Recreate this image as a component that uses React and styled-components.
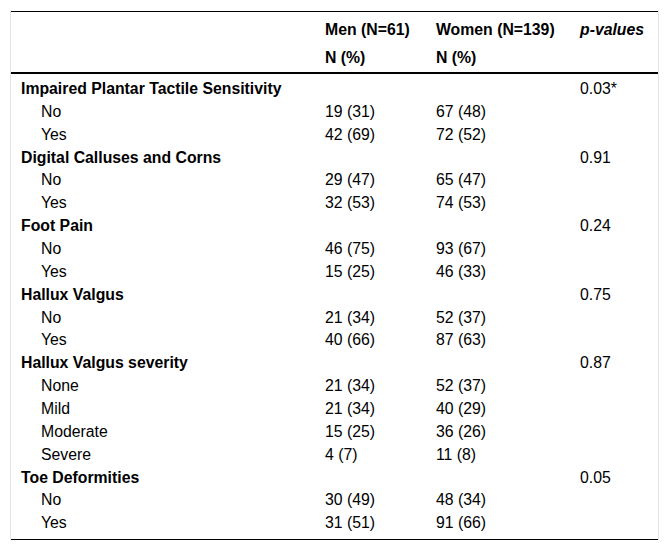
import React from "react";
import styled, { createGlobalStyle } from "styled-components";

const GlobalStyle = createGlobalStyle`
  body {
    margin: 0;
    background: #fff;
    font-family: "Liberation Sans", Arial, sans-serif;
    color: #000;
  }
`;

const Frame = styled.div`
  margin: 10px 0 0 10px;
  width: 647px;
  padding-top: 1px;
  border-left: 1px solid #e4e4e4;
  border-right: 1px solid #e4e4e4;
`;

const Table = styled.table`
  width: 647px;
  border-collapse: collapse;
  table-layout: fixed;
  font-size: 15.8px;
  border-top: 1px solid #000;
  border-bottom: 1px solid #000;
`;

const HeadRow = styled.tr`
  &:last-child {
    border-bottom: 2px solid #000;
  }
`;

const Th = styled.th`
  text-align: left;
  font-weight: bold;
  font-style: ${(p) => (p.$italic ? "italic" : "normal")};
  line-height: 16px;
  white-space: nowrap;
  padding: ${(p) => (p.$second ? "7px 0 6px" : "10px 0 5px")};
`;

const Body = styled.tbody`
  tr:first-child td {
    padding-top: 4px;
  }
  tr:last-child td {
    padding-bottom: 4px;
  }
`;

const Td = styled.td`
  line-height: 22.86px;
  padding: 0;
  white-space: nowrap;
  font-weight: ${(p) => (p.$group ? "bold" : "normal")};
  padding-left: ${(p) => (p.$indent ? "30px" : p.$label ? "10px" : "0")};
`;

const groups = [
  {
    title: "Impaired Plantar Tactile Sensitivity",
    p: "0.03*",
    rows: [
      ["No", "19 (31)", "67 (48)"],
      ["Yes", "42 (69)", "72 (52)"],
    ],
  },
  {
    title: "Digital Calluses and Corns",
    p: "0.91",
    rows: [
      ["No", "29 (47)", "65 (47)"],
      ["Yes", "32 (53)", "74 (53)"],
    ],
  },
  {
    title: "Foot Pain",
    p: "0.24",
    rows: [
      ["No", "46 (75)", "93 (67)"],
      ["Yes", "15 (25)", "46 (33)"],
    ],
  },
  {
    title: "Hallux Valgus",
    p: "0.75",
    rows: [
      ["No", "21 (34)", "52 (37)"],
      ["Yes", "40 (66)", "87 (63)"],
    ],
  },
  {
    title: "Hallux Valgus severity",
    p: "0.87",
    rows: [
      ["None", "21 (34)", "52 (37)"],
      ["Mild", "21 (34)", "40 (29)"],
      ["Moderate", "15 (25)", "36 (26)"],
      ["Severe", "4 (7)", "11 (8)"],
    ],
  },
  {
    title: "Toe Deformities",
    p: "0.05",
    rows: [
      ["No", "30 (49)", "48 (34)"],
      ["Yes", "31 (51)", "91 (66)"],
    ],
  },
];

const App = () => {
  return (
    <>
      <GlobalStyle />
      <Frame>
        <Table>
          <colgroup>
            <col style={{ width: 314 }} />
            <col style={{ width: 111 }} />
            <col style={{ width: 144 }} />
            <col style={{ width: 78 }} />
          </colgroup>
          <thead>
            <HeadRow>
              <Th />
              <Th>Men (N=61)</Th>
              <Th>Women (N=139)</Th>
              <Th $italic>p-values</Th>
            </HeadRow>
            <HeadRow>
              <Th $second />
              <Th $second>N (%)</Th>
              <Th $second>N (%)</Th>
              <Th $second />
            </HeadRow>
          </thead>
          <Body>
            {groups.map((g) => (
              <React.Fragment key={g.title}>
                <tr>
                  <Td $label $group>{g.title}</Td>
                  <Td />
                  <Td />
                  <Td>{g.p}</Td>
                </tr>
                {g.rows.map((r, i) => (
                  <tr key={i}>
                    <Td $indent>{r[0]}</Td>
                    <Td>{r[1]}</Td>
                    <Td>{r[2]}</Td>
                    <Td />
                  </tr>
                ))}
              </React.Fragment>
            ))}
          </Body>
        </Table>
      </Frame>
    </>
  );
};

export default App;
